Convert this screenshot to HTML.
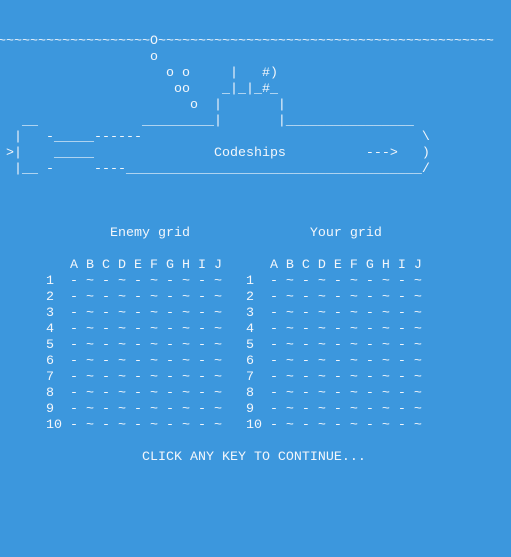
<!DOCTYPE html>
<html><head><meta charset="utf-8"><style>
html,body{margin:0;padding:0;background:#3c97dd;width:511px;height:557px;overflow:hidden}
pre{margin:0 0 0 -2px;padding:34px 0 0 0;font-family:"Liberation Mono",monospace;font-size:13.33px;line-height:16px;color:#f2f6fb}
</style></head><body><pre>~~~~~~~~~~~~~~~~~~~O~~~~~~~~~~~~~~~~~~~~~~~~~~~~~~~~~~~~~~~~~~
                   o
                     o o     |   #)
                      oo    _|_|_#_
                        o  |       |
   __             _________|       |________________
  |   -_____------                                   \
 >|    _____               Codeships          ---&gt;   )
  |__ -     ----_____________________________________/



              Enemy grid               Your grid

         A B C D E F G H I J      A B C D E F G H I J
      1  - ~ - ~ - ~ - ~ - ~   1  - ~ - ~ - ~ - ~ - ~
      2  - ~ - ~ - ~ - ~ - ~   2  - ~ - ~ - ~ - ~ - ~
      3  - ~ - ~ - ~ - ~ - ~   3  - ~ - ~ - ~ - ~ - ~
      4  - ~ - ~ - ~ - ~ - ~   4  - ~ - ~ - ~ - ~ - ~
      5  - ~ - ~ - ~ - ~ - ~   5  - ~ - ~ - ~ - ~ - ~
      6  - ~ - ~ - ~ - ~ - ~   6  - ~ - ~ - ~ - ~ - ~
      7  - ~ - ~ - ~ - ~ - ~   7  - ~ - ~ - ~ - ~ - ~
      8  - ~ - ~ - ~ - ~ - ~   8  - ~ - ~ - ~ - ~ - ~
      9  - ~ - ~ - ~ - ~ - ~   9  - ~ - ~ - ~ - ~ - ~
      10 - ~ - ~ - ~ - ~ - ~   10 - ~ - ~ - ~ - ~ - ~

                  CLICK ANY KEY TO CONTINUE...
</pre></body></html>
